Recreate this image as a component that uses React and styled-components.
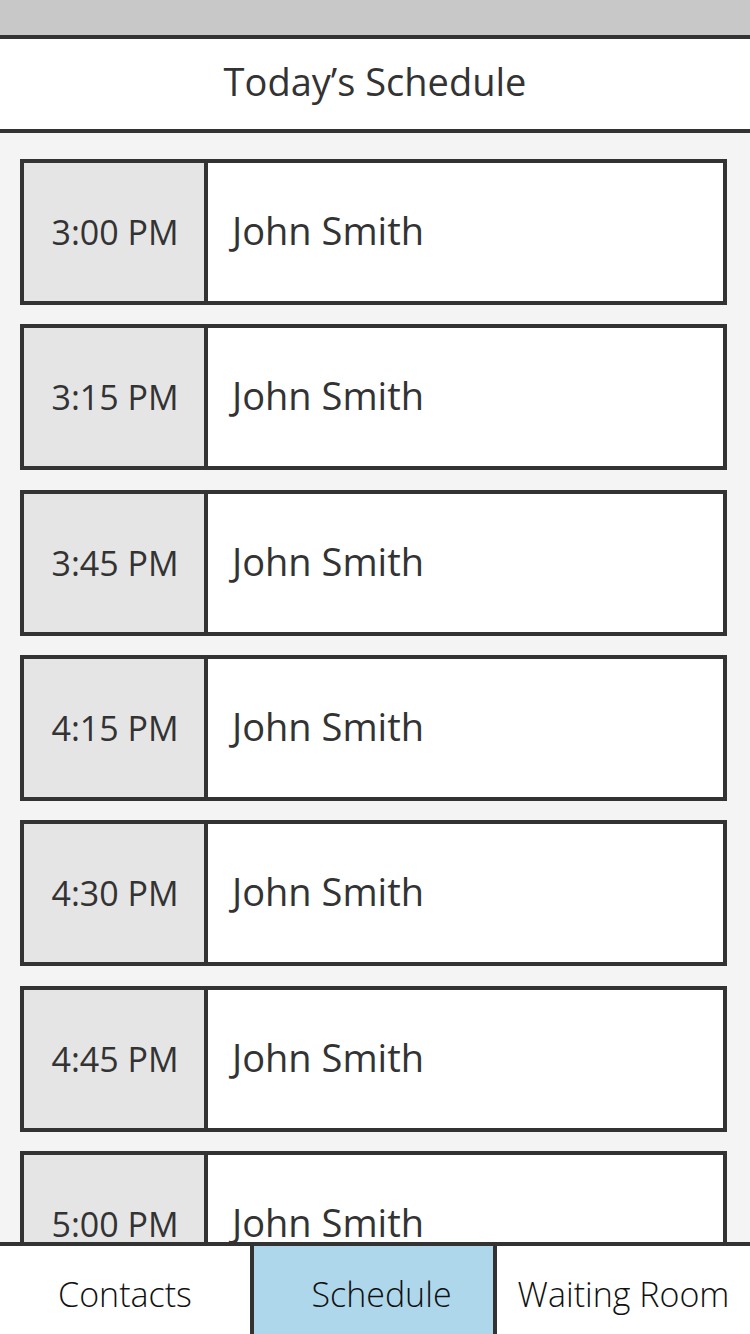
import React from "react";
import styled, { createGlobalStyle } from "styled-components";

const GlobalStyle = createGlobalStyle`
  html, body {
    margin: 0;
    padding: 0;
    background: #f4f4f4;
  }
  * {
    box-sizing: border-box;
  }
`;

const appointments = [
  { time: "3:00 PM", name: "John Smith" },
  { time: "3:15 PM", name: "John Smith" },
  { time: "3:45 PM", name: "John Smith" },
  { time: "4:15 PM", name: "John Smith" },
  { time: "4:30 PM", name: "John Smith" },
  { time: "4:45 PM", name: "John Smith" },
  { time: "5:00 PM", name: "John Smith" },
];

const tabs = ["Contacts", "Schedule", "Waiting Room"];

export default function App() {
  return (
    <>
      <GlobalStyle />
      <Screen>
        <StatusBar />
        <Header>
          <Title>Today’s Schedule</Title>
        </Header>
        <List>
          {appointments.map((a, i) => (
            <Card key={i}>
              <TimeCell>{a.time}</TimeCell>
              <NameCell>{a.name}</NameCell>
            </Card>
          ))}
        </List>
        <TabBar>
          {tabs.map((t) => (
            <Tab key={t} active={t === "Schedule"}>
              {t}
            </Tab>
          ))}
        </TabBar>
      </Screen>
    </>
  );
}

const Screen = styled.div`
  width: 750px;
  height: 1334px;
  display: flex;
  flex-direction: column;
  overflow: hidden;
  background: #f4f4f4;
  font-family: "Open Sans", "Liberation Sans", sans-serif;
  color: #333;
`;

const StatusBar = styled.div`
  height: 35px;
  flex-shrink: 0;
  background: #c8c8c8;
`;

const Header = styled.div`
  height: 98px;
  flex-shrink: 0;
  background: #fff;
  border-top: 4px solid #333;
  border-bottom: 4px solid #333;
  display: flex;
  align-items: center;
  justify-content: center;
  padding-bottom: 6px;
`;

const Title = styled.h1`
  margin: 0;
  font-size: 38px;
  font-weight: 400;
  line-height: 1;
  color: #333;
`;

const List = styled.div`
  flex: 1;
  min-height: 0;
  overflow: hidden;
  padding: 26px 23px 0 20px;
  display: flex;
  flex-direction: column;
  gap: 19.33px;
`;

const Card = styled.div`
  flex-shrink: 0;
  height: 146px;
  display: flex;
  border: 4px solid #333;
  background: #fff;
`;

const TimeCell = styled.div`
  width: 184px;
  flex-shrink: 0;
  background: #e5e5e5;
  border-right: 4px solid #333;
  display: flex;
  align-items: center;
  justify-content: center;
  padding-left: 2px;
  font-size: 34px;
  color: #333;
`;

const NameCell = styled.div`
  flex: 1;
  display: flex;
  align-items: center;
  padding-left: 24px;
  padding-bottom: 4px;
  font-size: 38px;
  color: #333;
`;

const TabBar = styled.div`
  height: 92px;
  flex-shrink: 0;
  display: grid;
  grid-template-columns: 250px 247px 253px;
  border-top: 4px solid #333;
  background: #fff;
`;

const Tab = styled.div`
  display: flex;
  align-items: center;
  justify-content: center;
  padding-top: 8px;
  padding-left: ${(p) => (p.active ? "16px" : "0")};
  font-size: 34px;
  font-weight: 300;
  color: #111;
  background: ${(p) => (p.active ? "#afd7eb" : "#fff")};
  border-left: ${(p) => (p.active ? "4px solid #333" : "none")};
  border-right: ${(p) => (p.active ? "4px solid #333" : "none")};
`;
